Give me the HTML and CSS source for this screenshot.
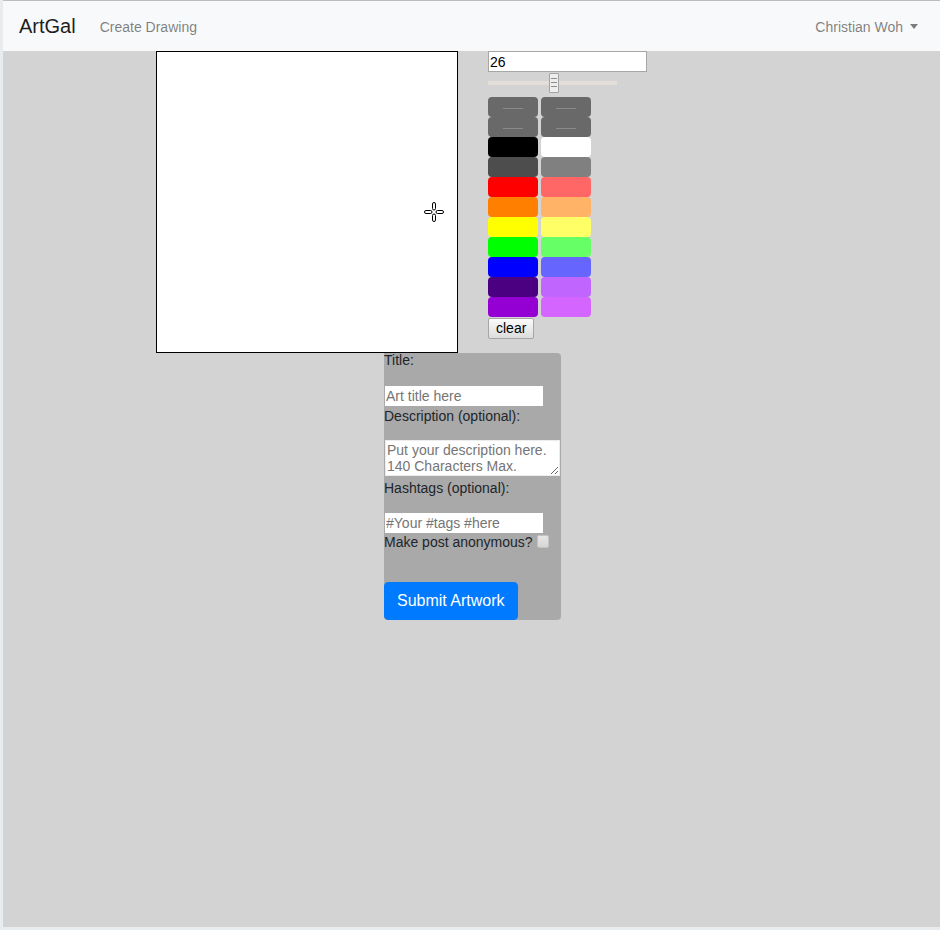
FILE: index.html
```html
<!DOCTYPE html>
<html lang="en">
<head>
<meta charset="utf-8">
<title>ArtGal - Create Drawing</title>
<link rel="stylesheet" href="styles.css">
</head>
<body>
<div class="window">
  <nav class="navbar">
    <a class="brand">ArtGal</a>
    <a class="nav-link">Create Drawing</a>
    <a class="nav-link user">Christian Woh<span class="caret"></span></a>
  </nav>
  <main class="main">
    <div class="editor">
      <div class="canvas-wrap">
        <svg class="cursor" width="22" height="22" viewBox="0 0 22 22">
          <rect x="9.5" y="1.5" width="3" height="7.5" rx="1.5" fill="#fff" stroke="#000"/>
          <rect x="9.5" y="13" width="3" height="7.5" rx="1.5" fill="#fff" stroke="#000"/>
          <rect x="1.5" y="9.5" width="7.5" height="3" rx="1.5" fill="#fff" stroke="#000"/>
          <rect x="13" y="9.5" width="7.5" height="3" rx="1.5" fill="#fff" stroke="#000"/>
        </svg>
      </div>
      <div class="tools">
        <input class="size-input" type="text" value="26">
        <input class="size-range" type="range" min="1" max="50" value="26">
        <div class="swatches">
          <button class="sw sw-tool"><span class="sw-line"></span></button>
          <button class="sw sw-tool"><span class="sw-line"></span></button>
          <button class="sw sw-tool"><span class="sw-line"></span></button>
          <button class="sw sw-tool"><span class="sw-line"></span></button>
          <button class="sw c-black"></button>
          <button class="sw c-white"></button>
          <button class="sw c-darkgray"></button>
          <button class="sw c-gray"></button>
          <button class="sw c-red"></button>
          <button class="sw c-lred"></button>
          <button class="sw c-orange"></button>
          <button class="sw c-lorange"></button>
          <button class="sw c-yellow"></button>
          <button class="sw c-lyellow"></button>
          <button class="sw c-green"></button>
          <button class="sw c-lgreen"></button>
          <button class="sw c-blue"></button>
          <button class="sw c-lblue"></button>
          <button class="sw c-indigo"></button>
          <button class="sw c-lindigo"></button>
          <button class="sw c-violet"></button>
          <button class="sw c-lviolet"></button>
        </div>
        <button class="clear">clear</button>
      </div>
    </div>
    <form class="post-form">
      <label class="lbl lbl-title">Title:</label>
      <input class="field field-title" type="text" placeholder="Art title here">
      <label class="lbl lbl-desc">Description (optional):</label>
      <textarea class="desc" placeholder="Put your description here. 140 Characters Max."></textarea>
      <label class="lbl lbl-tags">Hashtags (optional):</label>
      <input class="field field-tags" type="text" placeholder="#Your #tags #here">
      <div class="anon-row">
        <span class="anon-text">Make post anonymous?</span>
        <input class="anon-check" type="checkbox">
      </div>
      <button class="btn-primary" type="button">Submit Artwork</button>
    </form>
  </main>
</div>
</body>
</html>
```
FILE: styles.css
```css
* { box-sizing: border-box; }
html, body { margin: 0; padding: 0; }
body {
  width: 940px;
  height: 930px;
  overflow: hidden;
  background: #e9ecef;
  font-family: "Liberation Sans", Arial, sans-serif;
  color: #212529;
}
.window {
  margin-left: 3px;
  height: 927px;
  border-top: 1px solid #bdbdbd;
  background: #d3d3d3;
  display: flex;
  flex-direction: column;
}
.navbar {
  height: 50px;
  flex: none;
  background: #f8f9fa;
  display: flex;
  align-items: flex-start;
  padding: 0 0 0 16px;
}
.brand {
  margin-top: 10px;
  font-size: 20px;
  line-height: 30px;
  color: rgba(0, 0, 0, .9);
  margin-right: 16px;
}
.nav-link {
  margin-top: 16px;
  font-size: 14px;
  line-height: 21px;
  color: rgba(0, 0, 0, .5);
  padding: 0 8px;
}
.user {
  margin-left: auto;
  padding-right: 22px;
}
.caret {
  display: inline-block;
  width: 0;
  height: 0;
  margin-left: 7px;
  vertical-align: 3px;
  border-top: 5px solid rgba(0, 0, 0, .5);
  border-left: 4px solid transparent;
  border-right: 4px solid transparent;
}
.main {
  flex: 1;
  display: flex;
  flex-direction: column;
  align-items: center;
}
.editor {
  display: flex;
  gap: 30px;
}
.canvas-wrap {
  position: relative;
  width: 302px;
  height: 302px;
  border: 1px solid #000;
  background: #fff;
}
.cursor {
  position: absolute;
  left: 266px;
  top: 149px;
}
.tools {
  width: 299px;
  display: flex;
  flex-direction: column;
  align-items: flex-start;
}
.size-input {
  width: 159px;
  height: 21px;
  margin: 0;
  padding: 0 1px;
  border: 1px solid #a6a6a6;
  background: #fff;
  font-family: "Liberation Sans", Arial, sans-serif;
  font-size: 14px;
  color: #000;
  outline: none;
}
.size-range {
  -webkit-appearance: none;
  appearance: none;
  width: 129px;
  height: 20px;
  margin: 1px 0 0 0;
  padding: 0;
  background: transparent;
}
.size-range::-webkit-slider-runnable-track {
  height: 4px;
  background: #e3dfd8;
  border: none;
}
.size-range::-webkit-slider-thumb {
  -webkit-appearance: none;
  appearance: none;
  width: 10px;
  height: 20px;
  margin-top: -8px;
  border: 1px solid #a3a3a3;
  border-radius: 1px;
  background:
    linear-gradient(#8c8c8c, #8c8c8c) 1px 4px / 6px 1px no-repeat,
    linear-gradient(#8c8c8c, #8c8c8c) 1px 8px / 6px 1px no-repeat,
    linear-gradient(#8c8c8c, #8c8c8c) 1px 12px / 6px 1px no-repeat,
    #ededeb;
}
.swatches {
  display: grid;
  grid-template-columns: 50px 50px;
  column-gap: 3px;
  margin-top: 4px;
}
.sw {
  display: flex;
  align-items: center;
  justify-content: center;
  width: 50px;
  height: 20px;
  margin: 0;
  padding: 0;
  border: none;
  border-radius: 4px;
}
.sw-tool { background: #696969; }
.sw-line {
  width: 20px;
  height: 1px;
  margin-top: 2px;
  background: #8a8a8a;
}
.c-black { background: #000000; }
.c-white { background: #ffffff; }
.c-darkgray { background: #4d4d4d; }
.c-gray { background: #808080; }
.c-red { background: #ff0000; }
.c-lred { background: #ff6666; }
.c-orange { background: #ff8000; }
.c-lorange { background: #ffb366; }
.c-yellow { background: #ffff00; }
.c-lyellow { background: #ffff66; }
.c-green { background: #00ff00; }
.c-lgreen { background: #66ff66; }
.c-blue { background: #0000ff; }
.c-lblue { background: #6666ff; }
.c-indigo { background: #4b0082; }
.c-lindigo { background: #c066ff; }
.c-violet { background: #9400d3; }
.c-lviolet { background: #d466ff; }
.clear {
  margin-top: 1px;
  height: 21px;
  padding: 0 7px 1px;
  border: 1px solid #a6a6a6;
  border-radius: 2px;
  background: linear-gradient(#fbfbfb, #dcdcdc);
  font-family: "Liberation Sans", Arial, sans-serif;
  font-size: 14px;
  color: #000;
}
.post-form {
  width: 177px;
  margin: 0 0 0 2px;
  background: #a9a9a9;
  border-radius: 0 4px 4px 4px;
  font-size: 14px;
  display: flex;
  flex-direction: column;
  align-items: flex-start;
}
.lbl {
  display: block;
  line-height: 14px;
  color: #212529;
}
.lbl-desc { margin-top: 3px; }
.lbl-tags { margin-top: 5px; }
.field {
  width: 158px;
  height: 20px;
  margin-left: 1px;
  padding: 0 1px;
  border: none;
  background: #fff;
  font-family: "Liberation Sans", Arial, sans-serif;
  font-size: 14px;
  color: #000;
  outline: none;
}
.field-title { margin-top: 19px; }
.field-tags { margin-top: 18px; }
.field::placeholder, .desc::placeholder { color: #757575; }
.desc {
  width: 175px;
  height: 36px;
  margin: 17px 0 0 1px;
  padding: 1px 1px;
  border: 1px solid #ececec;
  background: #fff;
  font-family: "Liberation Sans", Arial, sans-serif;
  font-size: 14px;
  line-height: normal;
  color: #000;
  resize: both;
  outline: none;
}
.anon-row {
  display: flex;
  align-items: flex-start;
  margin-top: 2px;
}
.anon-text {
  line-height: 14px;
  color: #212529;
}
.anon-check {
  -webkit-appearance: none;
  appearance: none;
  width: 12px;
  height: 13px;
  margin: 0 0 0 4px;
  border: 1px solid #c4c4c4;
  border-radius: 2px;
  background: linear-gradient(#e6e6e6, #d6d6d6);
}
.btn-primary {
  margin-top: 33px;
  height: 38px;
  padding: 6px 12px;
  border: 1px solid #007bff;
  border-radius: 4px;
  background: #007bff;
  color: #fff;
  font-family: "Liberation Sans", Arial, sans-serif;
  font-size: 16px;
  line-height: 24px;
}
```
